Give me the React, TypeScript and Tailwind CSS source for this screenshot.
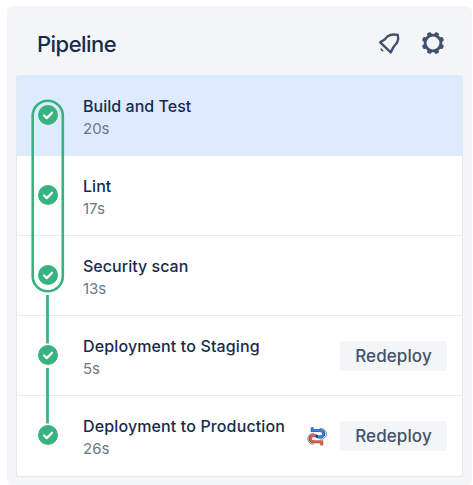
type Step = { name: string; time: string; selected?: boolean; piped?: boolean; redeploy?: boolean };

const steps: Step[] = [
  { name: "Build and Test", time: "20s", selected: true },
  { name: "Lint", time: "17s" },
  { name: "Security scan", time: "13s" },
  { name: "Deployment to Staging", time: "5s", redeploy: true },
  { name: "Deployment to Production", time: "26s", piped: true, redeploy: true },
];

function BellIcon() {
  return (
    <svg width="24" height="24" viewBox="0 0 24 24" fill="none" stroke="#42526e" strokeWidth="2.4" strokeLinejoin="round" strokeLinecap="round">
      <path d="M3.2 11.3 L7.6 8.6 C9.3 6.2 10.9 4.6 13.2 4 C15.6 3.3 18.4 3.4 20.8 3.9 C21.4 6.3 21.3 8.9 20.3 11.1 C19.3 13.3 17.2 14.5 16.3 16.4 L13.7 21.4 Z" />
      <path d="M4 16.9 C2.6 18.9 4.7 21 6.9 20.1 Z" fill="#42526e" stroke="none" />
    </svg>
  );
}

function GearIcon() {
  return (
    <svg width="24" height="24" viewBox="-12 -12 24 24">
      <circle r="7.9" fill="none" stroke="#42526e" strokeWidth="2.9" />
      {[22.5, 67.5, 112.5, 157.5, 202.5, 247.5, 292.5, 337.5].map((angle) => (
        <rect key={angle} x="-2.3" y="-11.2" width="4.6" height="4" rx="1.4" fill="#42526e" transform={`rotate(${angle})`} />
      ))}
    </svg>
  );
}

function CheckIcon() {
  return (
    <svg className="block" width="20" height="20" viewBox="0 0 20 20">
      <circle cx="10" cy="10" r="10" fill="#36b37e" />
      <path d="M6 10.5 L8.8 13.1 L14 7.7" fill="none" stroke="white" strokeWidth="2.3" strokeLinecap="round" strokeLinejoin="round" />
    </svg>
  );
}

function PipeIcon() {
  return (
    <svg className="block" width="20" height="20" viewBox="0 0 20 20" fill="none">
      <path d="M12.5 2.5 C21.5 1.8 22 13.5 13.2 13.2" stroke="#76777c" strokeWidth="0.9" />
      <path d="M7 7.3 C-1.5 7.2 -1 18.8 7 18.2" stroke="#76777c" strokeWidth="0.9" />
      <path d="M5.2 1.4 V4.7 H13 C18.2 4.7 18.2 11 13 11 H10.5" stroke="#263f67" strokeWidth="2.8" />
      <path d="M14.8 19.2 V15.8 H7 C1.8 15.8 1.8 9.7 7 9.7 H9.5" stroke="#6b3e3e" strokeWidth="2.8" />
      <path d="M5.2 1.4 V4.7 H13 C17.8 4.7 17.8 11 13 11 H10.5" stroke="#2684f5" strokeWidth="2" />
      <path d="M14.8 19.2 V15.8 H7 C2.2 15.8 2.2 9.7 7 9.7 H9.5" stroke="#f35b40" strokeWidth="2" />
      <path d="M8.7 8.9 H11 V11.7 H8.7 Z" fill="#17386b" />
    </svg>
  );
}

export default function App() {
  return (
    <div className="h-[485px] w-[473px] bg-white pt-1.5 pl-[7px] font-['Inter','Liberation_Sans',sans-serif]">
      <section className="h-[479px] w-[465px] rounded-[6px] bg-[#f4f5f7] px-[9px]">
        <header className="flex h-[69px] items-center pr-[18px] pl-[21px]">
          <h1 className="mt-[7px] flex-1 text-[22px] leading-7 font-medium tracking-[-0.53px] text-[#172b4d]">Pipeline</h1>
          <div className="mt-1 flex gap-5">
            <button aria-label="Notifications"><BellIcon /></button>
            <button aria-label="Settings"><GearIcon /></button>
          </div>
        </header>
        <div className="relative h-[402px] overflow-hidden rounded-[3px] border border-t-0 border-[#e5e8ec] bg-white">
          <ul>
            {steps.map((step) => (
              <li
                key={step.name}
                className={`flex h-20 items-center border-t pr-[15px] pb-px pl-[21px] ${step.selected ? "border-[#deebff] bg-[#deebff]" : "border-[#e8eaed]"}`}
              >
                <CheckIcon />
                <div className="ml-[25px] flex-1 pt-[5px]">
                  <div className={`text-base leading-[22px] font-medium whitespace-nowrap text-[#172b4d] ${step.redeploy ? "tracking-[0.13px]" : "tracking-[0.03px]"}`}>{step.name}</div>
                  <div className="mt-px text-[15px] leading-[22px] text-[#6b778c]">{step.time}</div>
                </div>
                {step.piped && <div className="mt-0.5 mr-[13px]"><PipeIcon /></div>}
                {step.redeploy && (
                  <button className="mt-[2px] h-[30px] w-[107px] rounded-[3px] bg-[#f4f5f7] pt-0.5 text-[17px] font-medium tracking-[0.1px] text-[#42526e]">Redeploy</button>
                )}
              </li>
            ))}
          </ul>
          <svg className="pointer-events-none absolute top-0 left-0" width="60" height="400" fill="none" stroke="#36b37e">
            <rect x="15.7" y="25.7" width="30.1" height="190.6" rx="15" strokeWidth="2.6" />
            <path d="M30.5 220 V268.5 M30.5 293 V348.5" strokeWidth="2.7" />
          </svg>
        </div>
      </section>
    </div>
  );
}
